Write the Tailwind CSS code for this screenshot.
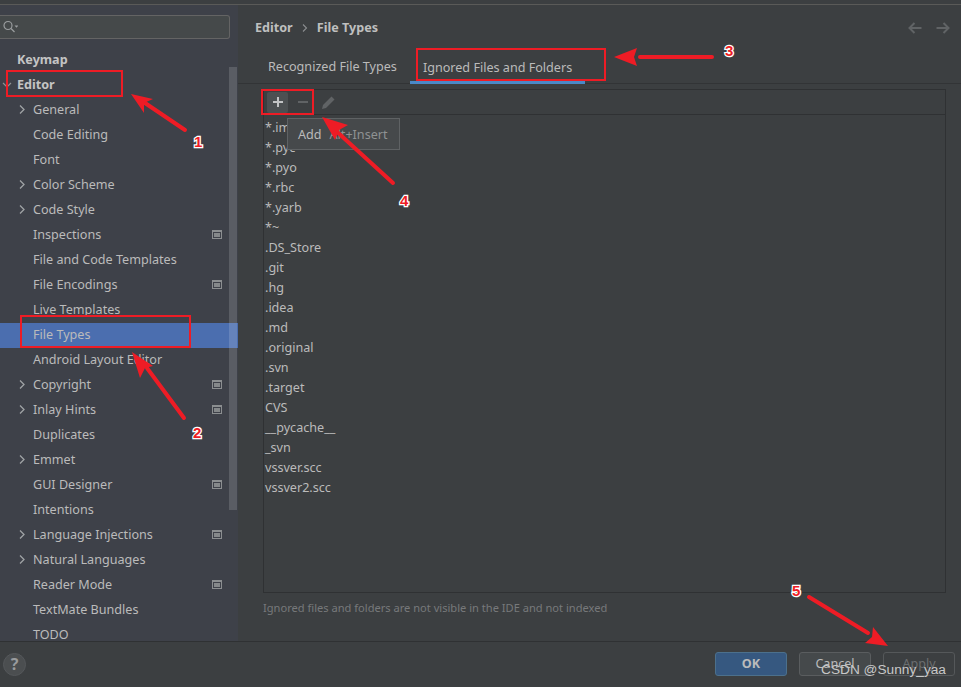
<!DOCTYPE html>
<html lang="en">
  <head>
    <meta charset="UTF-8" />
    <title>File Types</title>
    <script src="https://cdn.jsdelivr.net/npm/@tailwindcss/browser@4"></script>
  </head>
  <body class="bg-[#3c3f41] text-[#bbbbbb] font-['Noto_Sans',sans-serif] text-[12.6px] leading-[20px] overflow-hidden">
    <div class="relative w-[961px] h-[687px] overflow-hidden flex flex-col">
      <!-- title strip -->
      <div class="h-[5px] shrink-0 bg-[#3c3f41] border-b border-[#5a5a58]"></div>

      <div class="flex h-[637px] shrink-0 border-b border-[#2f3133]">
        <!-- sidebar -->
        <aside class="relative w-[238px] shrink-0 bg-[#3e4149] overflow-hidden">
          <div class="mt-[10px] h-[24px] w-[230px] bg-[#45494a] border border-[#646464] rounded-r-[3px] border-l-0 flex items-center pl-[2px]">
            <svg width="16" height="16" viewBox="0 0 16 16" fill="none" stroke="#9a9d9f" stroke-width="1.2"><circle cx="6" cy="6.5" r="4"/><path d="M9 9.5l3.5 3.5"/><path d="M12.5 6.5h4l-2 2.2z" fill="#9a9d9f" stroke="none"/></svg>
          </div>
          <div class="pt-[9px]">
            <div class="h-[25px] flex items-center pb-[2px] pl-[17px] font-bold text-[#c4c4c4]">Keymap</div>
            <div class="h-[25px] flex items-center pb-[2px] pl-[17px] font-bold text-[#c4c4c4] relative">
              <svg class="absolute left-[2px] top-[7px]" width="10" height="10" viewBox="0 0 10 10" fill="none" stroke="#8f9293" stroke-width="1.2"><path d="M1 3l4 4 4-4"/></svg>Editor
            </div>
            <div class="h-[25px] flex items-center pb-[2px] pl-[33px] relative"><svg class="absolute left-[17px] top-[6px]" width="10" height="11" viewBox="0 0 10 11" fill="none" stroke="#a0a3a5" stroke-width="1.3"><path d="M3 1.5l4 4-4 4"/></svg>General</div>
            <div class="h-[25px] flex items-center pb-[2px] pl-[33px]">Code Editing</div>
            <div class="h-[25px] flex items-center pb-[2px] pl-[33px]">Font</div>
            <div class="h-[25px] flex items-center pb-[2px] pl-[33px] relative"><svg class="absolute left-[17px] top-[6px]" width="10" height="11" viewBox="0 0 10 11" fill="none" stroke="#a0a3a5" stroke-width="1.3"><path d="M3 1.5l4 4-4 4"/></svg>Color Scheme</div>
            <div class="h-[25px] flex items-center pb-[2px] pl-[33px] relative"><svg class="absolute left-[17px] top-[6px]" width="10" height="11" viewBox="0 0 10 11" fill="none" stroke="#a0a3a5" stroke-width="1.3"><path d="M3 1.5l4 4-4 4"/></svg>Code Style</div>
            <div class="h-[25px] flex items-center pb-[2px] pl-[33px] relative">Inspections<span class="absolute left-[212px] top-[7px] w-[10px] h-[9px] border border-[#8b8e90] border-t-[2px] p-[1px] bg-[#85888a] bg-clip-content"></span></div>
            <div class="h-[25px] flex items-center pb-[2px] pl-[33px]">File and Code Templates</div>
            <div class="h-[25px] flex items-center pb-[2px] pl-[33px] relative">File Encodings<span class="absolute left-[212px] top-[7px] w-[10px] h-[9px] border border-[#8b8e90] border-t-[2px] p-[1px] bg-[#85888a] bg-clip-content"></span></div>
            <div class="h-[25px] flex items-center pb-[2px] pl-[33px]">Live Templates</div>
            <div class="h-[25px] flex items-center pb-[2px] pl-[33px] bg-[#4b6eaf]">File Types</div>
            <div class="h-[25px] flex items-center pb-[2px] pl-[33px]">Android Layout Editor</div>
            <div class="h-[25px] flex items-center pb-[2px] pl-[33px] relative"><svg class="absolute left-[17px] top-[6px]" width="10" height="11" viewBox="0 0 10 11" fill="none" stroke="#a0a3a5" stroke-width="1.3"><path d="M3 1.5l4 4-4 4"/></svg>Copyright<span class="absolute left-[212px] top-[7px] w-[10px] h-[9px] border border-[#8b8e90] border-t-[2px] p-[1px] bg-[#85888a] bg-clip-content"></span></div>
            <div class="h-[25px] flex items-center pb-[2px] pl-[33px] relative"><svg class="absolute left-[17px] top-[6px]" width="10" height="11" viewBox="0 0 10 11" fill="none" stroke="#a0a3a5" stroke-width="1.3"><path d="M3 1.5l4 4-4 4"/></svg>Inlay Hints<span class="absolute left-[212px] top-[7px] w-[10px] h-[9px] border border-[#8b8e90] border-t-[2px] p-[1px] bg-[#85888a] bg-clip-content"></span></div>
            <div class="h-[25px] flex items-center pb-[2px] pl-[33px]">Duplicates</div>
            <div class="h-[25px] flex items-center pb-[2px] pl-[33px] relative"><svg class="absolute left-[17px] top-[6px]" width="10" height="11" viewBox="0 0 10 11" fill="none" stroke="#a0a3a5" stroke-width="1.3"><path d="M3 1.5l4 4-4 4"/></svg>Emmet</div>
            <div class="h-[25px] flex items-center pb-[2px] pl-[33px] relative">GUI Designer<span class="absolute left-[212px] top-[7px] w-[10px] h-[9px] border border-[#8b8e90] border-t-[2px] p-[1px] bg-[#85888a] bg-clip-content"></span></div>
            <div class="h-[25px] flex items-center pb-[2px] pl-[33px]">Intentions</div>
            <div class="h-[25px] flex items-center pb-[2px] pl-[33px] relative"><svg class="absolute left-[17px] top-[6px]" width="10" height="11" viewBox="0 0 10 11" fill="none" stroke="#a0a3a5" stroke-width="1.3"><path d="M3 1.5l4 4-4 4"/></svg>Language Injections<span class="absolute left-[212px] top-[7px] w-[10px] h-[9px] border border-[#8b8e90] border-t-[2px] p-[1px] bg-[#85888a] bg-clip-content"></span></div>
            <div class="h-[25px] flex items-center pb-[2px] pl-[33px] relative"><svg class="absolute left-[17px] top-[6px]" width="10" height="11" viewBox="0 0 10 11" fill="none" stroke="#a0a3a5" stroke-width="1.3"><path d="M3 1.5l4 4-4 4"/></svg>Natural Languages</div>
            <div class="h-[25px] flex items-center pb-[2px] pl-[33px] relative">Reader Mode<span class="absolute left-[212px] top-[7px] w-[10px] h-[9px] border border-[#8b8e90] border-t-[2px] p-[1px] bg-[#85888a] bg-clip-content"></span></div>
            <div class="h-[25px] flex items-center pb-[2px] pl-[33px]">TextMate Bundles</div>
            <div class="h-[25px] flex items-center pb-[2px] pl-[33px]">TODO</div>
          </div>
          <!-- scrollbar lies over the rows -->
          <div class="absolute left-[229px] top-[62px] w-[8px] h-[443px] bg-white/15"></div>
        </aside>

        <!-- content -->
        <main class="flex-1 flex flex-col min-w-0">
          <div class="h-[45px] shrink-0 flex items-center pl-[17px] pr-[11px] font-bold text-[#bfbfbf]">
            <span>Editor</span>
            <svg class="mx-[8px]" width="8" height="10" viewBox="0 0 8 10" fill="none" stroke="#8a8d8f" stroke-width="1.1"><path d="M2 1.5l3.5 3.5L2 8.5"/></svg>
            <span>File Types</span>
            <div class="ml-auto flex gap-[14px]">
              <svg width="14" height="12" viewBox="0 0 14 12" fill="none" stroke="#606365" stroke-width="2"><path d="M13.5 6H2M6.5 1L1.5 6l5 5"/></svg>
              <svg width="14" height="12" viewBox="0 0 14 12" fill="none" stroke="#606365" stroke-width="2"><path d="M.5 6H12M7.5 1l5 5-5 5"/></svg>
            </div>
          </div>
          <div class="h-[34px] shrink-0 flex border-b border-[#323436] pl-[14px]">
            <div class="h-[33px] flex items-center px-[16px]">Recognized File Types</div>
            <div class="h-[34px] w-[175px] ml-[-3px] flex items-center pl-[13px] border-b-[3px] border-[#4a88c7] pt-[5px]">Ignored Files and Folders</div>
          </div>
          <div class="ml-[25px] mt-[5px] w-[683px] h-[504px] shrink-0 border border-[#2f3133] relative">
            <div class="h-[25px] border-b border-[#2f3133] flex items-center pl-[3px]">
              <div class="w-[21px] h-[21px] bg-[#4c5052] rounded-[2px] flex items-center justify-center">
                <svg width="12" height="12" viewBox="0 0 12 12" fill="none" stroke="#c2c4c5" stroke-width="2"><path d="M6 1v10M1 6h10"/></svg>
              </div>
              <div class="ml-[4px] w-[21px] h-[21px] flex items-center justify-center">
                <svg width="12" height="12" viewBox="0 0 12 12" fill="none" stroke="#606365" stroke-width="2"><path d="M1 6h10"/></svg>
              </div>
              <svg class="ml-[8px]" width="15" height="15" viewBox="0 0 15 15" fill="#606365"><path d="M10.5 1.5l3 3-8.5 8.5-4 1 1-4z"/></svg>
            </div>
            <div class="pt-[3px] pl-[1px]">
              <div class="h-[20px]">*.iml</div>
              <div class="h-[20px]">*.pyc</div>
              <div class="h-[20px]">*.pyo</div>
              <div class="h-[20px]">*.rbc</div>
              <div class="h-[20px]">*.yarb</div>
              <div class="h-[20px]">*~</div>
              <div class="h-[20px]">.DS_Store</div>
              <div class="h-[20px]">.git</div>
              <div class="h-[20px]">.hg</div>
              <div class="h-[20px]">.idea</div>
              <div class="h-[20px]">.md</div>
              <div class="h-[20px]">.original</div>
              <div class="h-[20px]">.svn</div>
              <div class="h-[20px]">.target</div>
              <div class="h-[20px]">CVS</div>
              <div class="h-[20px]">__pycache__</div>
              <div class="h-[20px]">_svn</div>
              <div class="h-[20px]">vssver.scc</div>
              <div class="h-[20px]">vssver2.scc</div>
            </div>
            <!-- tooltip -->
            <div class="absolute left-[23px] top-[28px] w-[113px] h-[32px] pt-[2px] bg-[#46494b] border border-[#5f6264] flex items-center pl-[10px] gap-[8px] whitespace-nowrap">
              <span>Add</span><span class="text-[#8f9293]">Alt+Insert</span>
            </div>
          </div>
          <div class="ml-[25px] mt-[5px] text-[11.1px] text-[#77797b]">Ignored files and folders are not visible in the IDE and not indexed</div>
        </main>
      </div>

      <!-- bottom bar -->
      <footer class="flex-1 flex items-center pl-[3px] pr-[6px] pb-[1px]">
        <div class="w-[23px] h-[23px] rounded-full bg-[#4b4e50] border border-[#54575a] flex items-center justify-center font-bold text-[16px] text-[#999b9d]">?</div>
        <div class="ml-auto flex gap-[12px]">
          <div class="w-[72px] h-[24px] rounded-[3px] bg-[#365880] border border-[#4c708c] flex items-center justify-center font-bold text-[#bbbbbb]">OK</div>
          <div class="w-[72px] h-[24px] rounded-[3px] bg-[#45494b] border border-[#5a5d5f] flex items-center justify-center text-[#bbbbbb]">Cancel</div>
          <div class="w-[72px] h-[24px] rounded-[3px] bg-[#3c3f41] border border-[#55585a] flex items-center justify-center text-[#6b6e70]">Apply</div>
        </div>
      </footer>

      <!-- screenshot annotations -->
      <svg class="absolute left-0 top-0 pointer-events-none" width="961" height="687" viewBox="0 0 961 687" fill="none">
        <g stroke="#ee1c25" stroke-width="2">
          <rect x="7" y="71" width="115" height="25"/>
          <rect x="21" y="316" width="169" height="31"/>
          <rect x="417" y="49" width="188" height="31"/>
          <rect x="262" y="90" width="51" height="24"/>
        </g>
        <g stroke="#ee1c25" stroke-width="4" stroke-linecap="round">
          <path d="M185 130L145 103"/>
          <path d="M184 418L147 368"/>
          <path d="M712 57H640"/>
          <path d="M393 183L335 130"/>
          <path d="M809 597L868 633"/>
        </g>
        <g fill="#ee1c25">
          <path d="M131 94l22 5-9 4 0 10z"/>
          <path d="M132 352l21 14-8 2-5 10z"/>
          <path d="M614 57l23-9-3 9 3 9z"/>
          <path d="M322 117l26 8-9 5-4 10z"/>
          <path d="M888 646l-23-3 7-6 1-10z"/>
        </g>
        <g font-family="'Liberation Sans',sans-serif" font-weight="700" font-size="15" fill="#ee1c25" stroke="#ffffff" stroke-width="2.5" paint-order="stroke">
          <text x="194" y="147">1</text>
          <text x="193" y="438">2</text>
          <text x="725" y="56">3</text>
          <text x="400" y="206">4</text>
          <text x="792" y="596">5</text>
        </g>
        <text x="821" y="674" font-family="'Liberation Sans',sans-serif" font-size="13.7" fill="#c8c8c8">CSDN @Sunny_yaa</text>
      </svg>
    </div>
  </body>
</html>
